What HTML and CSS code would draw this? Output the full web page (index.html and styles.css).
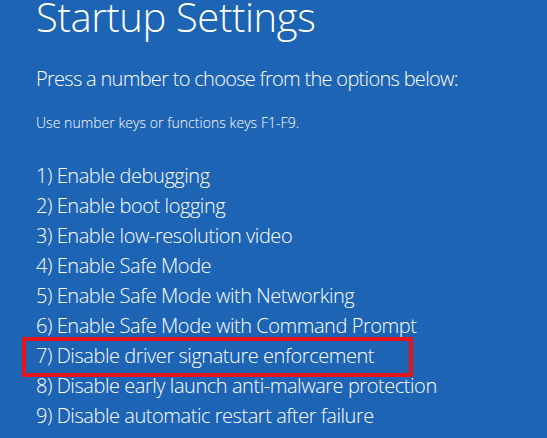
FILE: index.html
```html
<!DOCTYPE html>
<html lang="en">
<head>
<meta charset="utf-8">
<title>Startup Settings</title>
<link rel="stylesheet" href="styles.css">
</head>
<body>
<main class="screen">
  <h1 class="title">Startup Settings</h1>
  <p class="prompt">Press a number to choose from the options below:</p>
  <p class="hint">Use number keys or functions keys F1-F9.</p>
  <ol class="options">
    <li class="option">1) Enable debugging</li>
    <li class="option">2) Enable boot logging</li>
    <li class="option">3) Enable low-resolution video</li>
    <li class="option">4) Enable Safe Mode</li>
    <li class="option">5) Enable Safe Mode with Networking</li>
    <li class="option">6) Enable Safe Mode with Command Prompt</li>
    <li class="option option-marked">7) Disable driver signature enforcement</li>
    <li class="option">8) Disable early launch anti-malware protection</li>
    <li class="option">9) Disable automatic restart after failure</li>
  </ol>
</main>
</body>
</html>
```
FILE: styles.css
```css
html, body {
  margin: 0;
  padding: 0;
  background: #1e64b4;
}
body {
  width: 547px;
  height: 438px;
  overflow: hidden;
  color: #ffffff;
  font-family: "Open Sans", "Noto Sans", sans-serif;
}
.screen {
  padding-left: 36px;
}
.title {
  margin: 0;
  font-size: 40px;
  font-weight: 300;
  line-height: 34px;
  letter-spacing: -0.4px;
}
.prompt {
  margin: 33px 0 0 0;
  font-size: 20px;
  font-weight: 300;
  line-height: 24px;
  letter-spacing: -0.7px;
}
.hint {
  margin: 23px 0 0 0;
  font-size: 14px;
  font-weight: 300;
  line-height: 18px;
  letter-spacing: 0.05px;
}
.options {
  list-style: none;
  margin: 29px 0 0 0;
  padding: 0;
}
.option {
  position: relative;
  font-size: 20px;
  font-weight: 300;
  line-height: 30px;
  height: 30px;
  letter-spacing: -0.45px;
}
.option-marked::after {
  content: "";
  position: absolute;
  left: -14px;
  top: -4px;
  width: 383px;
  height: 32px;
  border: 4px solid #e8141c;
}
```
